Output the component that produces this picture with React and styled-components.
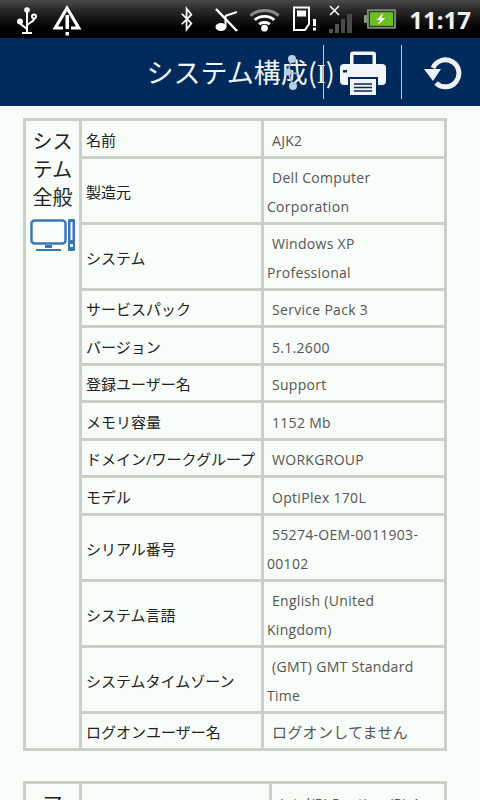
import styled, { createGlobalStyle } from "styled-components"

const Global = createGlobalStyle`
  html, body {
    margin: 0;
    padding: 0;
    background: #f9fdf9;
    overflow: hidden;
  }
`

const rows = [
  { label: "名前", value: "AJK2" },
  { label: "製造元", value: "Dell Computer Corporation", tall: true },
  { label: "システム", value: "Windows XP Professional", tall: true },
  { label: "サービスパック", value: "Service Pack 3" },
  { label: "バージョン", value: "5.1.2600" },
  { label: "登録ユーザー名", value: "Support" },
  { label: "メモリ容量", value: "1152 Mb" },
  { label: "ドメイン/ワークグループ", value: "WORKGROUP" },
  { label: "モデル", value: "OptiPlex 170L" },
  { label: "シリアル番号", value: "55274-OEM-0011903-00102", tall: true },
  { label: "システム言語", value: "English (United Kingdom)", tall: true },
  { label: "システムタイムゾーン", value: "(GMT) GMT Standard Time", tall: true },
  { label: "ログオンユーザー名", value: "ログオンしてません", jp: true },
]

const UsbIcon = () => (
  <svg width="24" height="30" viewBox="0 0 24 30" fill="none" stroke="#fff" strokeWidth="2">
    <circle cx="12" cy="6" r="2.8" fill="#fff" stroke="none" />
    <path d="M12 7v21M7 29h10" />
    <circle cx="5" cy="17.5" r="3" fill="#fff" stroke="none" />
    <path d="M5 18c0 4 7 5 7 8" />
    <circle cx="19" cy="12.5" r="2" />
    <path d="M19 15c0 3-7 4-7 7" />
  </svg>
)

const AlertIcon = () => (
  <svg width="32" height="34" viewBox="0 0 32 34">
    <path d="M16 3 30.500 27.500H20V24.500H25L16 9 7 24.500H12V27.500H1.500Z" fill="#fff" />
    <rect x="14.500" y="13" width="3.500" height="14" fill="#fff" />
    <rect x="14.500" y="30" width="3.500" height="3.500" fill="#fff" />
  </svg>
)

const BluetoothIcon = () => (
  <svg width="14" height="30" viewBox="0 0 16 30" fill="none" stroke="#fff" strokeWidth="2">
    <path d="M2 9 13 20 7.500 27V3L13 10 2 21" />
  </svg>
)

const MuteNoteIcon = () => (
  <svg width="24" height="30" viewBox="0 0 24 30" fill="none" stroke="#fff">
    <ellipse cx="7" cy="23" rx="5.500" ry="4" fill="#fff" stroke="none" />
    <path d="M11.500 23V12" strokeWidth="2" />
    <path d="M2 5 23 27" strokeWidth="2.500" />
    <path d="M11 12 23 8" strokeWidth="2" />
  </svg>
)

const WifiIcon = () => (
  <svg width="31" height="26" viewBox="0 0 32 26" fill="none">
    <path d="M1.500 9.500C9 2.500 23 2.500 30.500 9.500" stroke="#8b8b8b" strokeWidth="3" />
    <path d="M6 14C11 9 21 9 26 14" stroke="#fff" strokeWidth="3" />
    <path d="M10.500 18.500C13 16 19 16 21.500 18.500" stroke="#fff" strokeWidth="3" />
    <circle cx="16" cy="22.500" r="3.500" fill="#fff" />
  </svg>
)

const SimIcon = () => (
  <svg width="26" height="26" viewBox="0 0 26 26" fill="none">
    <path d="M2 1.500H17V18L13 24H2Z" stroke="#fff" strokeWidth="2" />
    <rect x="5" y="4.500" width="9" height="6" fill="#fff" />
    <rect x="21" y="13" width="3" height="7" fill="#fff" />
    <rect x="21" y="21.500" width="3" height="3" fill="#fff" />
  </svg>
)

const SignalIcon = () => (
  <svg width="26" height="30" viewBox="0 0 26 30">
    <path d="M1 2 10 11M10 2 1 11" stroke="#fff" strokeWidth="1.500" />
    <rect x="0" y="25" width="4" height="4" fill="#555" />
    <rect x="6" y="20" width="4" height="9" fill="#555" />
    <rect x="12" y="15" width="4" height="14" fill="#4a4a4a" />
    <rect x="18" y="10" width="5" height="19" fill="#4a4a4a" />
  </svg>
)

const BatteryIcon = () => (
  <svg width="33" height="22" viewBox="0 0 34 22">
    <rect x="0" y="7" width="3" height="8" fill="#8e9a88" />
    <rect x="3" y="1" width="30" height="20" rx="1" fill="#7f8a7c" />
    <rect x="5" y="3" width="26" height="16" fill="#1c2418" />
    <rect x="6" y="4" width="24" height="14" fill="#6cc024" />
    <path d="M20 4.500 13 12H17L14 17.500 22 10H18Z" fill="#fff" />
  </svg>
)

const PrinterIcon = () => (
  <svg width="46" height="46" viewBox="0 0 46 46">
    <path d="M10 16V4.500A3 3 0 0 1 13 1.500H33A3 3 0 0 1 36 4.500V16H32.500V5H13.500V16Z" fill="#f2f6fa" />
    <path d="M4 14H42A4 4 0 0 1 46 18V31A4 4 0 0 1 42 35H38V27H8V35H4A4 4 0 0 1 0 31V18A4 4 0 0 1 4 14Z" fill="#f2f6fa" />
    <rect x="3" y="20" width="4" height="2.500" fill="#012a5c" />
    <path d="M10 29H36V45H10Z" fill="#f2f6fa" />
    <path d="M14 34H32M14 37.500H32M14 41H32" stroke="#012a5c" strokeWidth="1.500" />
  </svg>
)

const RefreshIcon = () => (
  <svg width="38" height="34" viewBox="0 0 38 34" fill="none">
    <path d="M9 12A13.500 13.500 0 1 1 12 27" stroke="#eef3f7" strokeWidth="5" />
    <path d="M0 13H17L9 25Z" fill="#eef3f7" />
  </svg>
)

const DesktopIcon = () => (
  <svg width="46" height="34" viewBox="0 0 46 34" fill="none">
    <rect x="1.500" y="1.500" width="34" height="23" rx="3" stroke="#3a78b5" strokeWidth="2.500" />
    <rect x="15" y="26" width="7" height="3" fill="#3a78b5" />
    <rect x="6" y="30" width="25" height="2" fill="#3a78b5" />
    <rect x="38" y="0" width="7" height="32" rx="1" fill="#3a78b5" />
    <rect x="40.500" y="3" width="2" height="18" fill="#f9fdf9" />
    <rect x="40" y="25" width="3" height="3" fill="#f9fdf9" />
  </svg>
)

const App = () => {
  return <div>
    <Global />
    <StatusBar>
      <StatusGroup>
        <StatusIcon><UsbIcon /></StatusIcon>
        <StatusIcon $left={12}><AlertIcon /></StatusIcon>
      </StatusGroup>
      <StatusGroup>
        <StatusIcon><BluetoothIcon /></StatusIcon>
        <StatusIcon $left={20}><MuteNoteIcon /></StatusIcon>
        <StatusIcon $left={11}><WifiIcon /></StatusIcon>
        <StatusIcon $left={12}><SimIcon /></StatusIcon>
        <StatusIcon $left={11}><SignalIcon /></StatusIcon>
        <StatusIcon $left={9}><BatteryIcon /></StatusIcon>
        <Clock>11:17</Clock>
      </StatusGroup>
    </StatusBar>

    <Header>
      <Title>システム構成(<SerifI>I</SerifI>)</Title>
      <ShareDots viewBox="0 0 18 36" width="18" height="36">
        <path d="M8 3 4 17 9 31M4 17 15 19" stroke="#9fbcd8" strokeWidth="1.500" fill="none" />
        <circle cx="8" cy="4" r="4" fill="#b9cde0" />
        <circle cx="4" cy="17" r="3.500" fill="#b9cde0" />
        <circle cx="9" cy="31" r="4" fill="#b9cde0" />
      </ShareDots>
      <HeaderAction $width={78}><PrinterIcon /></HeaderAction>
      <HeaderAction $width={79} $pad={3}><RefreshIcon /></HeaderAction>
    </Header>

    <Content>
      <InfoTable>
        <colgroup>
          <col width="56" />
          <col width="182" />
          <col />
        </colgroup>
        <tbody>
          {rows.map((row, i) => (
            <Row key={row.label} $tall={row.tall}>
              {i === 0 && (
                <SectionCell rowSpan={rows.length}>
                  <SectionName>システム全般</SectionName>
                  <DesktopIcon />
                </SectionCell>
              )}
              <LabelCell>{row.label}</LabelCell>
              <ValueCell $jp={row.jp}>{row.value}</ValueCell>
            </Row>
          ))}
        </tbody>
      </InfoTable>

      <InfoTable>
        <colgroup>
          <col width="56" />
          <col width="190" />
          <col />
        </colgroup>
        <tbody>
          <Row $tall>
            <SectionCell>
              <SectionName>ア</SectionName>
            </SectionCell>
            <LabelCell></LabelCell>
            <ValueCell>Intel(R) Pentium(R) 4 CPU 2.80GHz</ValueCell>
          </Row>
        </tbody>
      </InfoTable>
    </Content>
  </div>;
};

export default App;

const StatusBar = styled.div`
  height: 38px;
  display: flex;
  justify-content: space-between;
  align-items: center;
  padding: 0 9px 0 15px;
  background: linear-gradient(#4a4a4a, #2a2a2a 25%, #000 75%);
`

const StatusGroup = styled.div`
  display: flex;
  align-items: center;
`

const StatusIcon = styled.span`
  display: flex;
  margin-left: ${p => p.$left || 0}px;
`

const Clock = styled.span`
  font-family: "Open Sans", sans-serif;
  font-size: 24px;
  font-weight: 700;
  color: #f0f0f0;
  margin-left: 12px;
`

const Header = styled.div`
  position: relative;
  height: 68px;
  display: flex;
  align-items: center;
  justify-content: flex-end;
  background: #012a5c;
`

const Title = styled.h1`
  margin: -2px -12px 0 0;
  font-family: "Noto Sans CJK JP", sans-serif;
  font-size: 27px;
  font-weight: 400;
  color: #eef4f8;
  white-space: nowrap;
`

const SerifI = styled.span`
  font-family: "Liberation Serif", serif;
`

const ShareDots = styled.svg`
  position: absolute;
  left: 284px;
  top: 17px;
`

const HeaderAction = styled.div`
  width: ${p => p.$width}px;
  height: 54px;
  box-sizing: border-box;
  display: flex;
  align-items: center;
  justify-content: center;
  padding: 1px 0 0 ${p => p.$pad || 0}px;
  border-left: 1px solid #b9c8d6;
`

const Content = styled.div`
  padding: 12px 33px 0 23px;
`

const InfoTable = styled.table`
  width: 424px;
  table-layout: fixed;
  border-collapse: collapse;
  border: 3px solid #c9cfc9;
  margin-bottom: 30px;
`

const Row = styled.tr`
  height: ${p => (p.$tall ? "66px" : "37.500px")};
`

const Cell = styled.td`
  border: 3px solid #c9cfc9;
  box-sizing: border-box;
  font-size: 14px;
  line-height: 29px;
`

const SectionCell = styled(Cell)`
  vertical-align: top;
  text-align: center;
  padding: 6px 2px 0;
  svg {
    display: block;
    margin: 8px auto 0;
  }
`

const SectionName = styled.div`
  font-family: "Noto Sans CJK JP", sans-serif;
  font-size: 20px;
  line-height: 28px;
  color: #222;
  word-break: break-all;
`

const LabelCell = styled(Cell)`
  padding: 4px 0 0 4px;
  font-family: "Open Sans", "Noto Sans CJK JP", sans-serif;
  font-size: 15px;
  color: #222;
  white-space: nowrap;
`

const ValueCell = styled(Cell)`
  padding: 4px 3px 0;
  text-indent: 5px;
  font-family: "Open Sans", "Noto Sans CJK JP", sans-serif;
  font-size: ${p => (p.$jp ? "15px" : "14px")};
  letter-spacing: 0.3px;
  color: #555;
`
